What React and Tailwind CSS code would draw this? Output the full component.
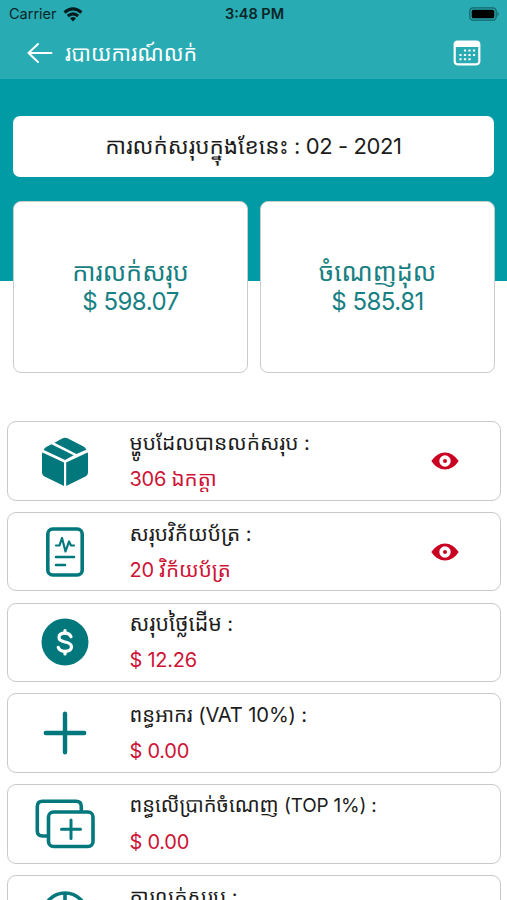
const SANS = "font-['Inter','Noto_Sans_Khmer','Khmer_OS','DejaVu_Sans',sans-serif]";

function Label({ className, children }) {
  return <div className={`whitespace-pre ${className}`}>{children}</div>;
}

function BoxIcon() {
  return (
    <svg viewBox="0 0 50 52" className="h-[52px] w-[50px]">
      <g fill="#02787d">
        <path d="M2.5 17.5 24 27.6V51L4.6 41.6Q2 40.3 2 37.5V19Q2 17.8 2.5 17.5Z" />
        <path d="M47.5 17.5 26.2 27.6V51L45.400 41.600Q48 40.300 48 37.500V19Q48 17.800 47.500 17.500Z" />
        <path d="M11.500 9.300 33.600 20.200 25 25 3.800 14.900Q4.200 13 6.200 12Z" />
        <path d="M14.500 7.800 22.200 3.600Q25 1.800 28 3.400L44 11.700Q46 13 46.200 14.700L36.500 19Z" />
      </g>
    </svg>
  );
}

function InvoiceIcon() {
  return (
    <svg viewBox="0 0 38 50" className="h-[50px] w-[38px]" fill="none" stroke="#02787d" strokeLinecap="round" strokeLinejoin="round">
      <rect x="1.800" y="2" width="34.400" height="46" rx="5" strokeWidth="3.600" />
      <path d="M10 18.500h3.500l2.500-7.500 3.500 13.500 3.500-10 2 4h3" strokeWidth="2.200" />
      <path d="M10 30h18M10 38h9" strokeWidth="2.600" />
    </svg>
  );
}

function DollarIcon() {
  return (
    <svg viewBox="0 0 48 48" className="size-12">
      <circle cx="24" cy="24" r="23.500" fill="#02787d" />
      <g fill="none" stroke="#fff" strokeWidth="3.200" strokeLinecap="round">
        <path d="M30 18.800c-.8-2.400-3-3.600-6-3.600-3.600 0-6 1.600-6 4.300 0 2.900 2.500 3.700 6 4.500 3.800.8 6.500 1.800 6.500 4.800 0 2.800-2.600 4.500-6.500 4.500-3.500 0-6-1.500-6.800-4" />
        <path d="M24 12.500v2.500M24 33.500v2.500" />
      </g>
    </svg>
  );
}

function PlusIcon() {
  return (
    <svg viewBox="0 0 44 44" className="size-11" stroke="#02787d" strokeWidth="4.400" strokeLinecap="round">
      <path d="M22 2.800v38.400M2.800 22h38.400" />
    </svg>
  );
}

function CardsIcon() {
  return (
    <svg viewBox="0 0 60 50" className="h-[50px] w-[60px]" fill="none" stroke="#02787d" strokeWidth="3.600" strokeLinecap="round" strokeLinejoin="round">
      <path d="M12 37H7.500Q2.300 37 2.300 32V7.500Q2.300 2.300 7.500 2.300H41Q46.300 2.300 46.300 7.500V12" />
      <rect x="13.500" y="13" width="44.500" height="34.500" rx="5" />
      <path d="M36 21v18.500M26.500 30.300h19" strokeWidth="3" />
    </svg>
  );
}

function CirclePlusIcon() {
  return (
    <svg viewBox="0 0 48 48" className="size-12" fill="none" stroke="#02787d" strokeWidth="3.600">
      <circle cx="24" cy="24" r="22" />
      <path d="M24 2v22" />
    </svg>
  );
}

function EyeIcon() {
  return (
    <svg viewBox="0 0 28 18" className="h-[18px] w-7">
      <path d="M.3 9Q6 .4 14 .4T27.700 9Q22 17.600 14 17.600T.3 9Z" fill="#c90022" />
      <circle cx="14" cy="9" r="5.700" fill="#fff" />
      <circle cx="14" cy="9" r="2" fill="#c90022" />
    </svg>
  );
}

const rows = [
  { title: "ម្ហូបដែលបានលក់សរុប", suffix: " :", amount: "306 ", unit: "ឯកត្តា", icon: BoxIcon, eye: true, titleSize: "text-[20.9px]" },
  { title: "សរុបវិក័យប័ត្រ", suffix: " :", amount: "20 ", unit: "វិក័យប័ត្រ", icon: InvoiceIcon, eye: true, titleSize: "text-[20.8px]" },
  { title: "សរុបថ្លៃដើម", suffix: " :", amount: "$ 12.26", icon: DollarIcon, titleSize: "text-[21.3px]" },
  { title: "ពន្ធអាករ", suffix: " (VAT 10%) :", amount: "$ 0.00", icon: PlusIcon, titleSize: "text-[20.2px]" },
  { title: "ពន្ធលើប្រាក់ចំណេញ", suffix: " (TOP 1%) :", amount: "$ 0.00", icon: CardsIcon, titleSize: "text-[20.1px]", suffixSize: "text-[18.9px]" },
  { title: "ការលក់សរុប", suffix: " :", amount: "$ 598.07", icon: CirclePlusIcon, titleSize: "text-[20.9px]" },
];

function Row({ title, suffix, amount, unit, icon: Icon, eye, titleSize, suffixSize = "text-[20.2px]" }) {
  return (
    <div className="flex h-[79.500px] shrink-0 items-center rounded-[9px] border-[1.500px] border-[#c9c9c9] bg-white">
      <div className="flex w-[114px] shrink-0 justify-center">
        <Icon />
      </div>
      <div className="flex grow flex-col pl-[7.5px] text-[20px]">
        <Label className="h-9 leading-[35px] text-[#1c1c1c]">
          <span className={titleSize}>{title}</span>
          <span className={`tracking-[-0.15px] ${suffixSize}`}>{suffix}</span>
        </Label>
        <Label className="h-9 leading-9 text-[#cd1436]">
          <span className="tracking-[-0.25px]">{amount}</span>
          {unit && <span className="text-[20.600px]">{unit}</span>}
        </Label>
      </div>
      {eye && (
        <div className="mr-[41px]">
          <EyeIcon />
        </div>
      )}
    </div>
  );
}

function SummaryCard({ title, value }) {
  return (
    <div className="flex flex-col items-center justify-center rounded-lg border-[1.500px] border-[#cbcbcb] bg-white">
      <Label className="h-[29px] text-[25.200px]">{title}</Label>
      <Label className="h-[29px] tracking-[-0.5px]">{value}</Label>
    </div>
  );
}

export default function App() {
  return (
    <div className={`flex h-[900px] w-[507px] flex-col overflow-hidden bg-white ${SANS}`}>
      <header className="h-[79px] shrink-0 bg-[#28abb3]">
        <div className="grid h-7 grid-cols-3 items-center pr-[7px] pl-[9px] text-[14.500px] text-[#0b2527]">
          <div className="flex items-center gap-1.5">
            <span>Carrier</span>
            <svg viewBox="0 0 20 15" className="h-[15px] w-5" fill="none" stroke="#051b1d" strokeWidth="3">
              <path d="M1.500 5.500Q10-1.700 18.500 5.500M4.800 9Q10 4.700 15.200 9" />
              <path d="M7 11.300Q10 8.800 13 11.300L10 14.500Z" fill="#051b1d" stroke="none" />
            </svg>
          </div>
          <span className="text-center font-semibold">3:48 PM</span>
          <svg viewBox="0 0 31 14" className="h-3.5 w-[31px] justify-self-end">
            <rect x=".8" y=".8" width="26.400" height="12.400" rx="3.500" fill="none" stroke="#17666b" strokeWidth="1.300" />
            <rect x="2.700" y="2.700" width="22.600" height="8.600" rx="1.500" fill="#000" />
            <path d="M28.500 4.500Q31 7 28.500 9.500Z" fill="#17666b" />
          </svg>
        </div>
        <div className="flex h-[49px] items-center pr-[26px] pl-[27px] text-white">
          <svg viewBox="0 0 26 22" className="h-[22px] w-[26px]" fill="none" stroke="#fff" strokeWidth="2" strokeLinecap="round" strokeLinejoin="round">
            <path d="M11 2 1.500 11l9.500 9M1.500 11H24.500" />
          </svg>
          <Label className="grow pl-3 text-[21.400px] leading-[34px]">របាយការណ៍លក់</Label>
          <svg viewBox="0 0 28 26" className="h-[26px] w-7">
            <rect x="1.700" y="1.700" width="24.600" height="22.600" rx="3" fill="none" stroke="#fff" strokeWidth="2.200" />
            <path d="M1.500 7V4Q1.500 1.500 4 1.500H24Q26.500 1.500 26.500 4V7Z" fill="#fff" />
            <path d="M10.900 10.500h11.500M6.400 14.900h16M6.400 19.200h11.500" stroke="#fff" strokeWidth="2" strokeDasharray="2.200 2.300" />
          </svg>
        </div>
      </header>

      <div className="flex h-[320px] shrink-0 flex-col bg-[linear-gradient(#019ba5_0_202px,#fff_202px)] pt-[37px] pr-3 pl-[13px]">
        <div className="mr-px flex h-[60.500px] shrink-0 justify-center rounded-[7px] bg-white text-[22px] leading-[59px] text-[#1c1c1c]">
          <Label className="">
            <span className="text-[22.500px]">ការលក់សរុបក្នុងខែនេះ</span>
            <span className="tracking-[-0.400px]"> : 02 - 2021</span>
          </Label>
        </div>
        <div className="mt-[24.500px] grid h-[171.500px] shrink-0 grid-cols-2 gap-3 text-[24px] leading-[29px] text-[#178083]">
          <SummaryCard title="ការលក់សរុប" value="$ 598.07" />
          <SummaryCard title="ចំណេញដុល" value="$ 585.81" />
        </div>
      </div>

      <div className="mt-[22px] flex flex-col gap-[11.250px] pr-1.5 pl-[7px]">
        {rows.map((row) => (
          <Row key={row.title} {...row} />
        ))}
      </div>
    </div>
  );
}
